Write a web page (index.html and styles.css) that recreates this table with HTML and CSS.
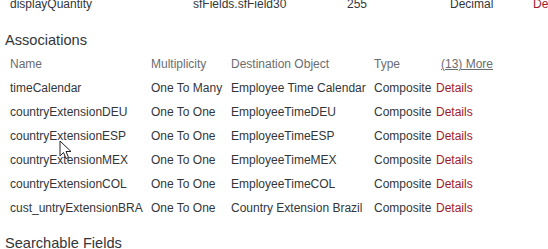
FILE: index.html
```html
<!DOCTYPE html>
<html>
<head>
<meta charset="utf-8">
<link rel="stylesheet" href="styles.css">
</head>
<body>
<div class="page">
  <div class="row top-row">
    <span>displayQuantity</span>
    <span>sfFields.sfField30</span>
    <span>255</span>
    <span>Decimal</span>
    <span class="link">De</span>
  </div>

  <h2 class="section-title">Associations</h2>

  <div class="assoc">
    <div class="row head">
      <span>Name</span>
      <span>Multiplicity</span>
      <span>Destination Object</span>
      <span>Type</span>
      <span class="more">(13) More</span>
    </div>
    <div class="row">
      <span>timeCalendar</span><span>One To Many</span><span>Employee Time Calendar</span><span>Composite</span><span class="link">Details</span>
    </div>
    <div class="row">
      <span>countryExtensionDEU</span><span>One To One</span><span>EmployeeTimeDEU</span><span>Composite</span><span class="link">Details</span>
    </div>
    <div class="row">
      <span>countryExtensionESP</span><span>One To One</span><span>EmployeeTimeESP</span><span>Composite</span><span class="link">Details</span>
    </div>
    <div class="row">
      <span>countryExtensionMEX</span><span>One To One</span><span>EmployeeTimeMEX</span><span>Composite</span><span class="link">Details</span>
    </div>
    <div class="row">
      <span>countryExtensionCOL</span><span>One To One</span><span>EmployeeTimeCOL</span><span>Composite</span><span class="link">Details</span>
    </div>
    <div class="row">
      <span>cust_untryExtensionBRA</span><span>One To One</span><span>Country Extension Brazil</span><span>Composite</span><span class="link">Details</span>
    </div>
  </div>

  <h2 class="section-title second">Searchable Fields</h2>

  <svg class="cursor" width="14" height="20" viewBox="0 0 14 20">
    <path d="M1 1 L1 16 L4.5 12.5 L7 18.5 L9.5 17.5 L7 11.5 L12 11.5 Z" fill="#fff" stroke="#222" stroke-width="1" stroke-linejoin="miter"/>
  </svg>
</div>
</body>
</html>
```
FILE: styles.css
```css
html, body {
  margin: 0;
  padding: 0;
  background: #ffffff;
}
body {
  font-family: "Liberation Sans", Arial, sans-serif;
  font-size: 12px;
  color: #32363a;
  overflow: hidden;
}
.page {
  position: relative;
  width: 548px;
  height: 249px;
  overflow: hidden;
}
.row {
  display: grid;
  height: 24px;
  line-height: 24px;
  padding-left: 10px;
  white-space: nowrap;
}
.top-row {
  margin-top: -8px;
  grid-template-columns: 183px 154px 103px 83px auto;
}
.assoc .row {
  grid-template-columns: 141px 80px 143px 62px auto;
}
.head {
  color: #6a6d70;
}
.more {
  padding-left: 5px;
  color: #6a6d70;
  text-decoration: underline;
}
.link {
  color: #a2192c;
}
.section-title {
  margin: 0;
  padding: 14px 0 2px 5px;
  font-size: 14.6px;
  font-weight: normal;
  line-height: 20px;
  color: #32363a;
}
.section-title.second {
  padding-top: 13px;
}
.cursor {
  position: absolute;
  left: 59px;
  top: 140px;
}
```
